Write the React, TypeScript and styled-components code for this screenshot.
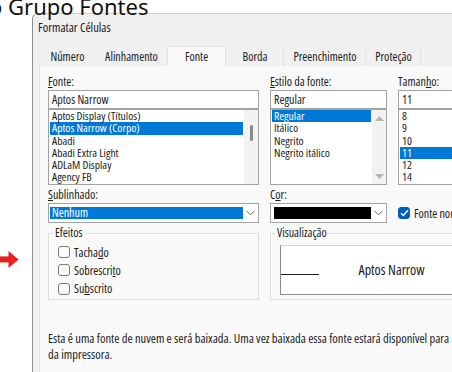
import styled, { createGlobalStyle } from "styled-components"

const GlobalStyle = createGlobalStyle`
  body {
    margin: 0;
    background: #fff;
    font-family: "Open Sans", "Noto Sans", sans-serif;
    font-stretch: 75%;
    font-size: 12px;
    color: #1b1b1b;
  }
`

const fonts = ["Aptos Display (Títulos)", "Aptos Narrow (Corpo)", "Abadi", "Abadi Extra Light", "ADLaM Display", "Agency FB"]
const styles = ["Regular", "Itálico", "Negrito", "Negrito itálico"]
const sizes = ["8", "9", "10", "11", "12", "14"]

function Chevron() {
  return (
    <svg width="9" height="6" viewBox="0 0 9 6">
      <polyline points="0.5,0.8 4.5,4.8 8.5,0.8" fill="none" stroke="#6b6b6b" strokeWidth="1" />
    </svg>
  )
}

function Check() {
  return (
    <svg width="9" height="8" viewBox="0 0 9 8">
      <polyline points="1,4.2 3.4,6.5 8,1.3" fill="none" stroke="#fff" strokeWidth="1.4" />
    </svg>
  )
}

function RedArrow() {
  return (
    <svg width="19" height="17" viewBox="0 0 19 17">
      <rect x="0" y="5.4" width="10" height="6" fill="#e8201f" />
      <polygon points="8.5,0 18.5,8.5 8.5,17" fill="#e8201f" />
    </svg>
  )
}

function ScrollArrow({ up }: { up?: boolean }) {
  return (
    <svg width="9" height="5" viewBox="0 0 9 5">
      <polygon points={up ? "0,5 4.5,0 9,5" : "0,0 4.5,5 9,0"} fill="#b4b4b4" />
    </svg>
  )
}

export default function App() {
  return (
    <Page>
      <GlobalStyle />
      <Heading>o Grupo Fontes</Heading>
      <Body>
        <Gutter>
          <RedArrow />
        </Gutter>
        <Dialog>
          <TitleBar>Formatar Células</TitleBar>
          <TabStrip>
            <Tab $w={57}>Número</Tab>
            <Tab $w={71}>Alinhamento</Tab>
            <Tab $w={59} $active>Fonte</Tab>
            <Tab $w={58} $divider>Borda</Tab>
            <Tab $w={82} $divider>Preenchimento</Tab>
            <Tab $w={55} $divider>Proteção</Tab>
          </TabStrip>
          <Panel>
            <Grid>
              <Label><u>F</u>onte:</Label>
              <Label><u>E</u>stilo da fonte:</Label>
              <Label>Taman<u>h</u>o:</Label>

              <Field>
                <TextBox>Aptos Narrow</TextBox>
                <ListBox>
                  <Items>
                    {fonts.map((f, i) => (
                      <Item key={f} $selected={i === 1}>{f}</Item>
                    ))}
                  </Items>
                  <ScrollTrack>
                    <Thumb />
                  </ScrollTrack>
                </ListBox>
              </Field>
              <Field>
                <TextBox>Regular</TextBox>
                <ListBox>
                  <Items>
                    {styles.map((s, i) => (
                      <Item key={s} $selected={i === 0}>{s}</Item>
                    ))}
                  </Items>
                  <ScrollTrack $arrows>
                    <ScrollArrow up />
                    <ScrollArrow />
                  </ScrollTrack>
                </ListBox>
              </Field>
              <Field>
                <TextBox>11</TextBox>
                <ListBox>
                  <Items>
                    {sizes.map((s) => (
                      <Item key={s} $selected={s === "11"}>{s}</Item>
                    ))}
                  </Items>
                </ListBox>
              </Field>

              <SubLabel><u>S</u>ublinhado:</SubLabel>
              <SubLabel>C<u>o</u>r:</SubLabel>
              <span />

              <Combo>
                <ComboFill $color="#0078d7">Nenhum</ComboFill>
                <ComboButton><Chevron /></ComboButton>
              </Combo>
              <Combo>
                <ComboFill $color="#000" $inset />
                <ComboButton><Chevron /></ComboButton>
              </Combo>
              <CheckRow>
                <CheckBox $checked><Check /></CheckBox>
                <span>Fonte normal</span>
              </CheckRow>

              <Group>
                <Legend>Efeitos</Legend>
                <CheckRow $tall>
                  <CheckBox />
                  <span>Tacha<u>d</u>o</span>
                </CheckRow>
                <CheckRow $tall>
                  <CheckBox />
                  <span>Sobrescri<u>t</u>o</span>
                </CheckRow>
                <CheckRow $tall>
                  <CheckBox />
                  <span>Su<u>b</u>scrito</span>
                </CheckRow>
              </Group>
              <PreviewGroup>
                <Legend>Visualização</Legend>
                <Preview>
                  <SampleRow>
                    <BaseLine />
                    <Sample>Aptos Narrow</Sample>
                    <BaseLine />
                  </SampleRow>
                </Preview>
              </PreviewGroup>
            </Grid>
            <Note>
              Esta é uma fonte de nuvem e será baixada. Uma vez baixada essa fonte estará disponível para a tela e a saída
              <br />
              da impressora.
            </Note>
          </Panel>
        </Dialog>
      </Body>
    </Page>
  )
}

const Page = styled.div`
  width: 452px;
  height: 372px;
  overflow: hidden;
  display: flex;
  flex-direction: column;
`

const Heading = styled.div`
  position: relative;
  z-index: 1;
  flex: none;
  height: 17px;
  margin: -4px 0 0 -11px;
  font-family: "Noto Sans", sans-serif;
  font-stretch: normal;
  font-size: 22px;
  line-height: 20px;
  color: #111;
  white-space: nowrap;
`

const Body = styled.div`
  flex: 1;
  display: flex;
  min-height: 0;
`

const Gutter = styled.div`
  flex: none;
  width: 32px;
  padding-top: 238px;
  box-sizing: border-box;

  svg {
    display: block;
  }
`

const Dialog = styled.div`
  flex: none;
  width: 520px;
  display: flex;
  flex-direction: column;
  background: #f0f0f0;
  border-left: 1px solid #8e8e8e;
  border-top: 1px solid #cfcfcf;
  border-top-left-radius: 6px;
`

const TitleBar = styled.div`
  height: 32px;
  box-sizing: border-box;
  padding: 6px 0 0 5px;
  line-height: 16px;
  font-size: 12.5px;
  color: #1a1a1a;
`

const TabStrip = styled.div`
  display: flex;
  height: 20px;
  margin-left: 6px;
`

const Tab = styled.div<{ $w: number; $active?: boolean; $divider?: boolean }>`
  width: ${(p) => p.$w}px;
  box-sizing: border-box;
  text-align: center;
  line-height: 19px;
  white-space: nowrap;
  background: ${(p) => (p.$active ? "#f9f9f9" : "transparent")};
  border: 1px solid ${(p) => (p.$active ? "#e2e2e2" : "transparent")};
  border-bottom: none;
  border-right-color: ${(p) => (p.$active || p.$divider ? "#e2e2e2" : "transparent")};
`

const Panel = styled.div`
  flex: 1;
  margin-left: 6px;
  padding: 8px 0 0 8px;
  background: #f9f9f9;
  border-left: 1px solid #e4e4e4;
`

const Grid = styled.div`
  display: grid;
  grid-template-columns: 211px 117px 115px;
  column-gap: 11px;
  align-items: start;
`

const Label = styled.div`
  line-height: 16px;
  white-space: nowrap;
`

const SubLabel = styled(Label)`
  margin-top: 2px;
`

const Field = styled.div`
  display: flex;
  flex-direction: column;
`

const TextBox = styled.div`
  height: 19px;
  box-sizing: border-box;
  border: 1px solid #a3a3a3;
  background: #fff;
  padding-left: 3px;
  line-height: 17px;
`

const ListBox = styled.div`
  height: 76px;
  box-sizing: border-box;
  border: 1px solid #a3a3a3;
  background: #fff;
  display: flex;
`

const Items = styled.div`
  flex: 1;
  min-width: 0;
  padding: 0 1px;
`

const Item = styled.div<{ $selected?: boolean }>`
  font-size: 11.6px;
  line-height: 12.3px;
  height: 12.3px;
  padding-left: 2px;
  white-space: nowrap;
  background: ${(p) => (p.$selected ? "#0078d7" : "transparent")};
  color: ${(p) => (p.$selected ? "#fff" : "inherit")};
`

const ScrollTrack = styled.div<{ $arrows?: boolean }>`
  flex: none;
  width: 14px;
  background: #f2f2f2;
  display: flex;
  flex-direction: column;
  align-items: center;
  justify-content: ${(p) => (p.$arrows ? "space-between" : "flex-start")};
  padding: ${(p) => (p.$arrows ? "6px 0 5px" : "15px 0 0")};
  box-sizing: border-box;
`

const Thumb = styled.div`
  width: 3px;
  height: 16px;
  border-radius: 2px;
  background: #8a8a8a;
`

const Combo = styled.div`
  height: 20px;
  box-sizing: border-box;
  border: 1px solid #a3a3a3;
  background: #fff;
  display: flex;
  padding: 3px 0 3px 1px;
`

const ComboFill = styled.div<{ $color: string; $inset?: boolean }>`
  flex: 1;
  margin-left: ${(p) => (p.$inset ? "2px" : "0")};
  background: ${(p) => p.$color};
  color: #fff;
  line-height: 12px;
  padding-left: 2px;
`

const ComboButton = styled.div`
  flex: none;
  width: 15px;
  display: flex;
  align-items: center;
  justify-content: center;
`

const CheckRow = styled.div<{ $tall?: boolean }>`
  display: flex;
  align-items: center;
  gap: 4px;
  height: ${(p) => (p.$tall ? "18.3px" : "20px")};
  white-space: nowrap;
`

const CheckBox = styled.span<{ $checked?: boolean }>`
  flex: none;
  width: 12px;
  height: 12px;
  box-sizing: border-box;
  border-radius: 3px;
  border: 1px solid ${(p) => (p.$checked ? "#005fb8" : "#7a7a7a")};
  background: ${(p) => (p.$checked ? "#005fb8" : "#fbfbfb")};
  display: flex;
  align-items: center;
  justify-content: center;
`

const Group = styled.fieldset`
  margin: 2px 0 0;
  min-width: 0;
  padding: 2px 0 1px 9px;
  border: 1px solid #dcdcdc;
  box-shadow: inset 1px 1px 0 #fff;
`

const PreviewGroup = styled(Group)`
  grid-column: 2 / 4;
  padding: 4px 9px 4px 9px;
`

const Legend = styled.legend`
  margin-left: -5px;
  padding: 0 2px;
  line-height: 16px;
`

const Preview = styled.div`
  height: 50px;
  box-sizing: border-box;
  background: #fff;
  border: 1px solid #d6d6d6;
  border-left-color: #8a8a8a;
  border-bottom-color: #8a8a8a;
  display: flex;
  flex-direction: column;
  justify-content: center;
`

const SampleRow = styled.div`
  display: flex;
  align-items: baseline;
  justify-content: space-between;
`

const BaseLine = styled.div`
  width: 38px;
  border-bottom: 1px solid #222;
`

const Sample = styled.div`
  font-size: 14px;
  line-height: 18px;
`

const Note = styled.div`
  margin-top: 31px;
  font-size: 12.5px;
  line-height: 16px;
  white-space: nowrap;
`
